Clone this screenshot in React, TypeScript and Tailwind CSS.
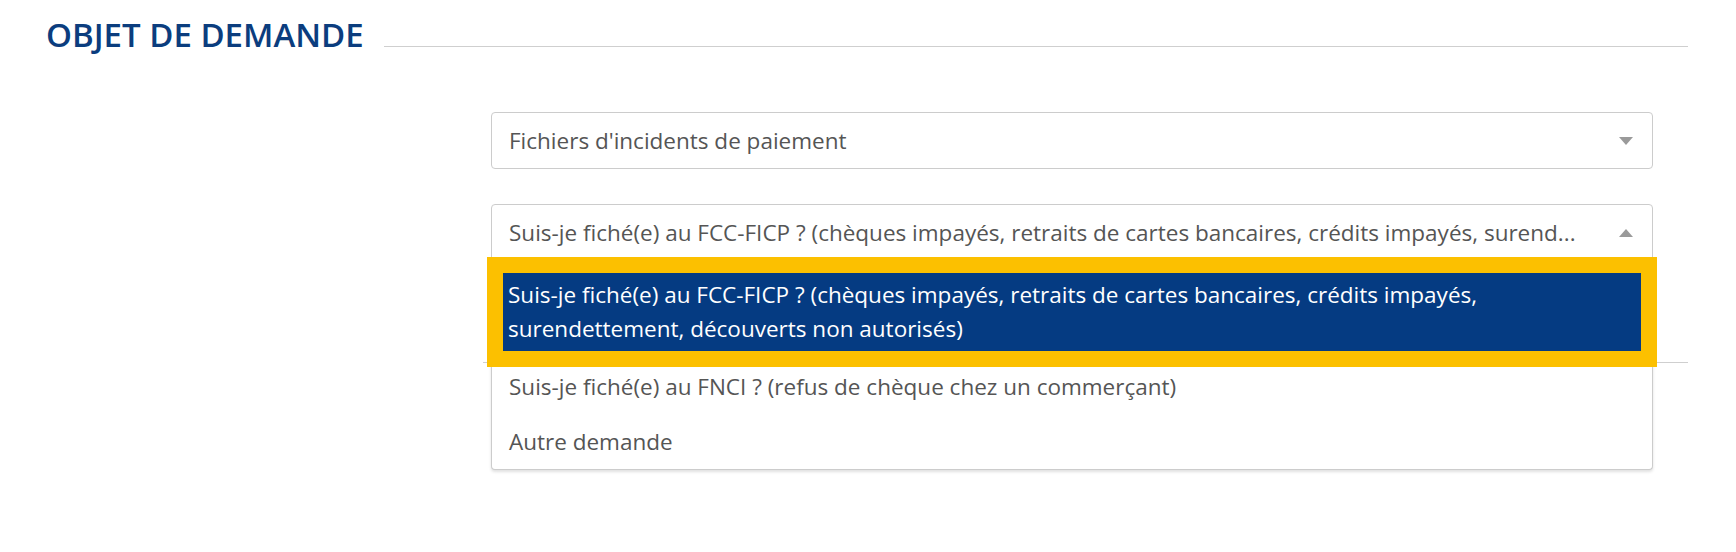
import React from "react";

function Caret({ up = false }: { up?: boolean }) {
  return (
    <svg width="14" height="8" viewBox="0 0 14 8" className="shrink-0">
      {up ? (
        <path d="M0 8 L7 0 L14 8 Z" fill="#9a9a9a" />
      ) : (
        <path d="M0 0 L14 0 L7 8 Z" fill="#9a9a9a" />
      )}
    </svg>
  );
}

function Select({ value, open = false }: { value: string; open?: boolean }) {
  return (
    <div
      className={`flex h-[57px] items-center border border-[#cccccc] bg-white pl-[17px] pr-[19px] ${
        open ? "rounded-t-[4px]" : "rounded-[4px]"
      }`}
    >
      <span className="flex-1 truncate text-[22.5px] leading-[32px] text-[#555555]">
        {value}
      </span>
      <span className="ml-[12px]">
        <Caret up={open} />
      </span>
    </div>
  );
}

const options = [
  "Suis-je fiché(e) au FNCI ? (refus de chèque chez un commerçant)",
  "Autre demande",
];

export default function App() {
  return (
    <div className="min-h-[552px] bg-white font-['Open_Sans',sans-serif]">
      {/* Section title */}
      <div className="flex items-end pl-[46px] pr-[48px] pt-[15px]">
        <h2 className="text-[33px] font-semibold leading-[40px] text-[#0b3d7e]">
          OBJET DE DEMANDE
        </h2>
        <div className="mb-[8px] ml-[20px] h-px flex-1 bg-[#cfcfcf]" />
      </div>

      {/* Form */}
      <div className="ml-[491px] mt-[57px] w-[1162px]">
        <Select value="Fichiers d'incidents de paiement" />

        <div className="relative mt-[35px]">
          <Select
            open
            value="Suis-je fiché(e) au FCC-FICP ? (chèques impayés, retraits de cartes bancaires, crédits impayés, surend..."
          />

          {/* Dropdown list */}
          <div className="absolute left-0 right-0 top-full z-10 rounded-b-[4px] border border-t-0 border-[#cccccc] bg-white shadow-[0_2px_3px_rgba(0,0,0,0.12)]">
            <div className="mx-[11px] mb-[8px] mt-[12px] bg-[#053b82] px-[5px] py-[5px] text-[22.5px] leading-[34px] text-white shadow-[0_0_0_16px_#fcc000]">
              Suis-je fiché(e) au FCC-FICP ? (chèques impayés, retraits de cartes
              bancaires, crédits impayés,
              <br />
              surendettement, découverts non autorisés)
            </div>
            {options.map((o) => (
              <div
                key={o}
                className="flex h-[55px] items-center pl-[17px] text-[22.5px] leading-[32px] text-[#555555]"
              >
                {o}
              </div>
            ))}
          </div>
        </div>
      </div>

      {/* Next section divider, under the open list */}
      <div className="ml-[483px] mr-[48px] mt-[101px] border-t border-[#cfcfcf]" />
    </div>
  );
}
